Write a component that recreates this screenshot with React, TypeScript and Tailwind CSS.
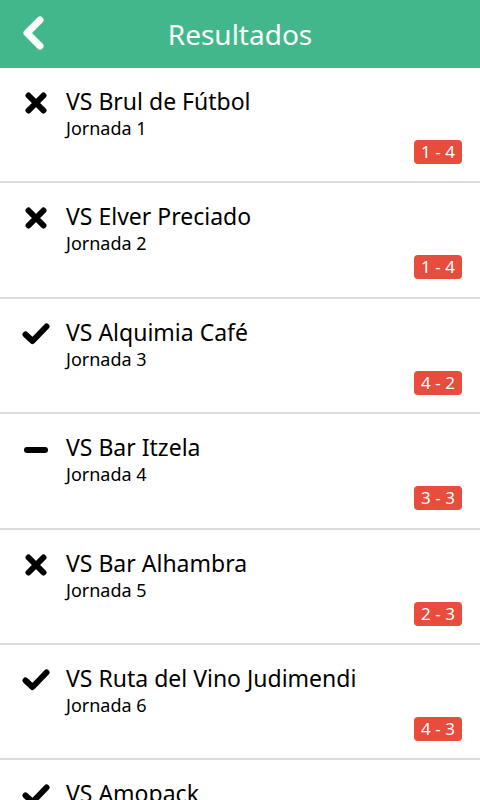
type Result = 'win' | 'loss' | 'draw';

interface Match {
  rival: string;
  jornada: number;
  score: string;
  result: Result;
}

const matches: Match[] = [
  { rival: 'Brul de Fútbol', jornada: 1, score: '1 - 4', result: 'loss' },
  { rival: 'Elver Preciado', jornada: 2, score: '1 - 4', result: 'loss' },
  { rival: 'Alquimia Café', jornada: 3, score: '4 - 2', result: 'win' },
  { rival: 'Bar Itzela', jornada: 4, score: '3 - 3', result: 'draw' },
  { rival: 'Bar Alhambra', jornada: 5, score: '2 - 3', result: 'loss' },
  { rival: 'Ruta del Vino Judimendi', jornada: 6, score: '4 - 3', result: 'win' },
  { rival: 'Amopack', jornada: 7, score: '3 - 1', result: 'win' },
];

// icons drawn to match the thick glyphs in the app
const ResultIcon = ({ result }: { result: Result }) => {
  if (result === 'win')
    return (
      <svg width="28" height="22" viewBox="0 0 28 22" className="text-black">
        <path d="M3.5 11.5 L10.5 18 L24.5 3.5" fill="none" stroke="currentColor" strokeWidth="6" strokeLinecap="round" strokeLinejoin="round" />
      </svg>
    );
  if (result === 'draw')
    return (
      <svg width="26" height="22" viewBox="0 0 26 22" className="text-black">
        <path d="M4 12 L22 12" fill="none" stroke="currentColor" strokeWidth="6" strokeLinecap="round" />
      </svg>
    );
  return (
    <svg width="24" height="22" viewBox="0 0 24 22" className="text-black">
      <path d="M4.5 3.5 L19.5 18.5 M19.5 3.5 L4.5 18.5" fill="none" stroke="currentColor" strokeWidth="6" strokeLinecap="round" />
    </svg>
  );
};

const MatchRow = ({ match }: { match: Match }) => (
  <div className="h-[115.4px] shrink-0 border-b-2 border-[#dcdcdc] flex flex-col">
    <div className="flex pt-[18px]">
      <div className="w-[66px] flex justify-center pl-[6px] pt-[6px]">
        <ResultIcon result={match.result} />
      </div>
      <div className="flex flex-col">
        <span className="text-[23px] leading-[31px] text-black">VS {match.rival}</span>
        <span className="text-[18px] leading-[23px] text-black">Jornada {match.jornada}</span>
      </div>
    </div>
    <div className="flex justify-end pr-[18px]">
      <span className="h-[24px] w-[48px] rounded-[4px] bg-[#e74c3c] text-white text-[17px] leading-[24px] text-center">
        {match.score}
      </span>
    </div>
  </div>
);

export default function App() {
  return (
    <div
      className="w-[480px] h-[800px] overflow-hidden bg-white flex flex-col"
      style={{ fontFamily: '"Noto Sans", "Open Sans", sans-serif' }}
    >
      <header className="h-[68px] shrink-0 bg-[#42b78c] flex items-center relative">
        <button className="absolute left-[20px] top-[14px] text-white">
          <svg width="28" height="38" viewBox="0 0 28 38">
            <path d="M20 6 L7 19 L20 32" fill="none" stroke="white" strokeWidth="7" strokeLinecap="round" strokeLinejoin="round" />
          </svg>
        </button>
        <h1 className="flex-1 text-center text-white text-[28px] leading-[68px]">Resultados</h1>
      </header>
      {matches.map((m) => (
        <MatchRow key={m.jornada} match={m} />
      ))}
    </div>
  );
}
